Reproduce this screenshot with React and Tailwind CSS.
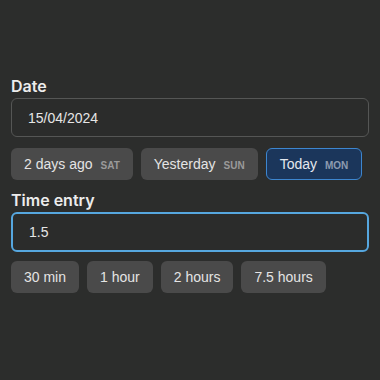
import React, { useState } from 'react';

const days = [
  { label: '2 days ago', day: 'SAT' },
  { label: 'Yesterday', day: 'SUN' },
  { label: 'Today', day: 'MON', active: true },
];

const durations = ['30 min', '1 hour', '2 hours', '7.5 hours'];

export default function App() {
  const [date, setDate] = useState('15/04/2024');
  const [time, setTime] = useState('1.5');

  return (
    <div className="min-h-screen bg-[#2c2d2c] px-[11px] pt-[74px] text-[#e8e8e8] font-['Liberation_Sans',Arial,sans-serif]">
      <label className="block font-['Inter',sans-serif] text-[16px] font-semibold leading-6 text-[#ececec]">Date</label>
      <input
        value={date}
        onChange={e => setDate(e.target.value)}
        className="block h-[39px] w-full rounded-md border border-[#555655] bg-[#2b2c2b] px-4 text-[14px] text-[#e6e6e6] outline-none"
      />
      <div className="mt-[11px] flex gap-2">
        {days.map(d => (
          <button
            key={d.label}
            type="button"
            className={`flex h-8 items-center whitespace-nowrap rounded-md px-[13px] text-[14px] ${d.active ? 'border border-[#3d86cf] bg-[#1b365b] text-[#e4e8ee]' : 'bg-[#4a4a4a] text-[#e4e4e4]'}`}
          >
            {d.label}
            <span className={`ml-2 mt-[3px] text-[10px] font-bold ${d.active ? 'text-[#8e9bb0]' : 'text-[#9a9a9a]'}`}>{d.day}</span>
          </button>
        ))}
      </div>
      <label className="mt-[8px] block font-['Inter',sans-serif] text-[16px] font-semibold leading-6 text-[#ececec]">Time entry</label>
      <input
        value={time}
        onChange={e => setTime(e.target.value)}
        className="block h-10 w-full rounded-md border-2 border-[#56a7df] bg-[#2b2c2b] px-4 text-[14px] text-[#e6e6e6] outline-none"
      />
      <div className="mt-[9px] flex gap-2">
        {durations.map(t => (
          <button key={t} type="button" className="flex h-8 items-center whitespace-nowrap rounded-md bg-[#4a4a4a] px-[13px] text-[14px] text-[#e4e4e4]">
            {t}
          </button>
        ))}
      </div>
    </div>
  );
}
